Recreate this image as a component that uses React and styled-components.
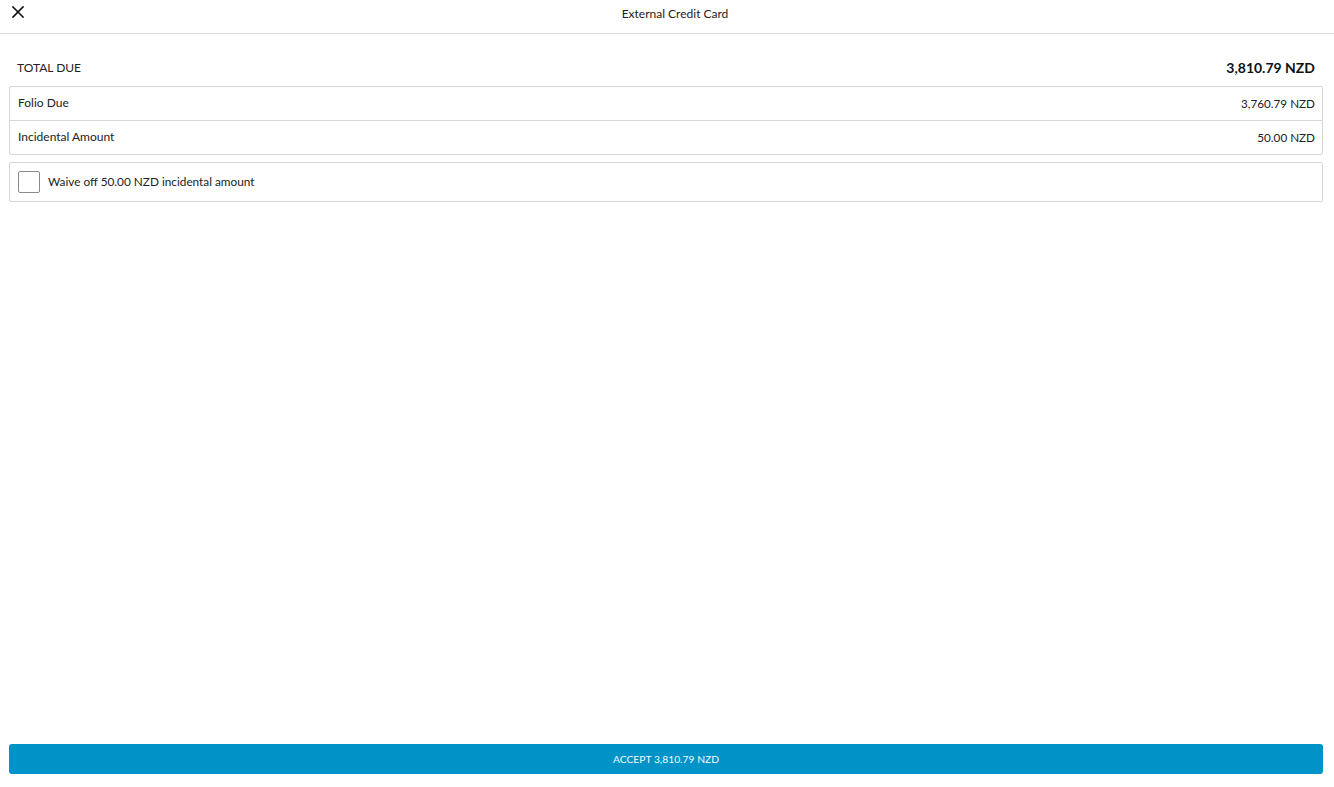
import React, { useState } from 'react';
import styled, { createGlobalStyle } from 'styled-components';

const GlobalStyle = createGlobalStyle`
  html, body {
    margin: 0;
    padding: 0;
    background: #fff;
  }
  body {
    font-family: Lato, 'Open Sans', sans-serif;
    color: #1a1a1a;
  }
`;

const Page = styled.div`
  display: flex;
  flex-direction: column;
  height: 787px;
  box-sizing: border-box;
`;

const Header = styled.header`
  position: relative;
  height: 33px;
  border-bottom: 1px solid #dcdcdc;
  display: flex;
  align-items: center;
  justify-content: center;
  padding-left: 16px;
  flex-shrink: 0;
`;

const CloseButton = styled.button`
  position: absolute;
  left: 9px;
  top: 3px;
  width: 18px;
  height: 18px;
  padding: 0;
  border: none;
  background: none;
  cursor: pointer;
  display: flex;
  align-items: center;
  justify-content: center;
`;

const Title = styled.h1`
  margin: 0;
  margin-top: -7px;
  font-size: 12px;
  font-weight: 400;
  color: #222;
`;

const Content = styled.main`
  flex: 1;
  padding: 25px 11px 0 9px;
  display: flex;
  flex-direction: column;
`;

const TotalRow = styled.div`
  display: flex;
  justify-content: space-between;
  align-items: center;
  height: 17px;
  padding: 0 8px;
  margin-bottom: 10px;
`;

const TotalLabel = styled.span`
  font-size: 12px;
  color: #222;
`;

const TotalAmount = styled.span`
  font-size: 14px;
  font-weight: 700;
  color: #111;
`;

const Table = styled.div`
  border: 1px solid #d6d6d6;
  border-radius: 2px;
`;

const Row = styled.div`
  display: flex;
  justify-content: space-between;
  align-items: center;
  height: 31px;
  padding: 0 7px 2px 8px;
  font-size: 12px;
  color: #222;
  border-top: ${(p) => (p.first ? 'none' : '1px solid #d6d6d6')};
`;

const Amount = styled.span`
  font-size: 11.7px;
`;

const WaiveCard = styled.label`
  margin-top: 7px;
  display: flex;
  align-items: center;
  gap: 8px;
  height: 38px;
  padding: 0 8px;
  border: 1px solid #d6d6d6;
  border-radius: 2px;
  font-size: 11.8px;
  color: #222;
  cursor: pointer;
`;

const WaiveText = styled.span`
  margin-top: -1px;
`;

const Box = styled.span`
  width: 20px;
  height: 20px;
  border: 1px solid #8a8a8a;
  border-radius: 2px;
  display: flex;
  align-items: center;
  justify-content: center;
  background: ${(p) => (p.checked ? '#0093c8' : '#fff')};
`;

const Footer = styled.div`
  padding: 0 11px 13px 9px;
`;

const AcceptButton = styled.button`
  width: 100%;
  height: 30px;
  border: none;
  border-radius: 3px;
  background: #0093c8;
  color: #f2f9fc;
  font-family: Lato, sans-serif;
  font-size: 10.3px;
  cursor: pointer;
`;

export default function App() {
  const [waive, setWaive] = useState(false);
  const total = waive ? '3,760.79 NZD' : '3,810.79 NZD';

  return (
    <Page>
      <GlobalStyle />
      <Header>
        <CloseButton aria-label="Close">
          <svg width="14" height="14" viewBox="0 0 14 14">
            <path d="M2 2 L12 12 M12 2 L2 12" stroke="#111" strokeWidth="1.6" strokeLinecap="square" />
          </svg>
        </CloseButton>
        <Title>External Credit Card</Title>
      </Header>
      <Content>
        <TotalRow>
          <TotalLabel>TOTAL DUE</TotalLabel>
          <TotalAmount>{total}</TotalAmount>
        </TotalRow>
        <Table>
          <Row first>
            <span>Folio Due</span>
            <Amount>3,760.79 NZD</Amount>
          </Row>
          <Row>
            <span>Incidental Amount</span>
            <Amount>50.00 NZD</Amount>
          </Row>
        </Table>
        <WaiveCard onClick={() => setWaive(!waive)}>
          <Box checked={waive}>
            {waive && (
              <svg width="12" height="12" viewBox="0 0 12 12">
                <path d="M2 6 L5 9 L10 3" stroke="#fff" strokeWidth="1.8" fill="none" />
              </svg>
            )}
          </Box>
          <WaiveText>Waive off 50.00 NZD incidental amount</WaiveText>
        </WaiveCard>
      </Content>
      <Footer>
        <AcceptButton>ACCEPT {total}</AcceptButton>
      </Footer>
    </Page>
  );
}
